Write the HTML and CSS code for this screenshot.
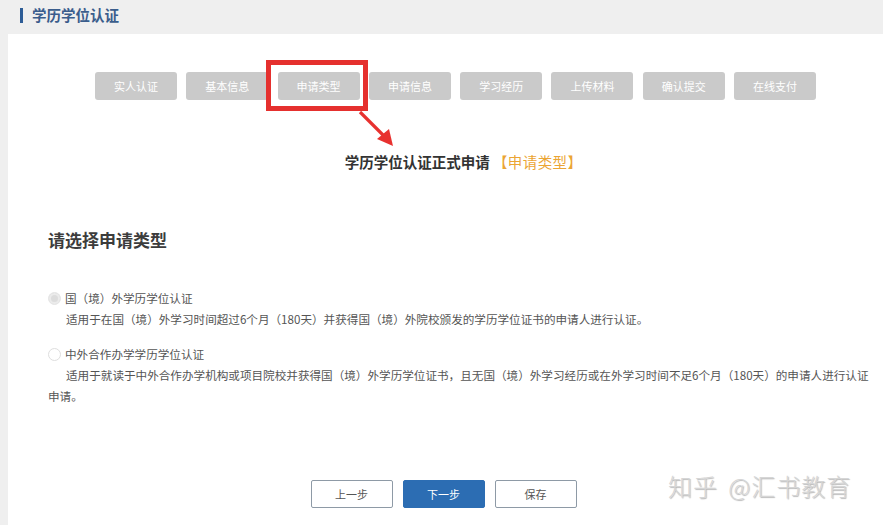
FILE: index.html
```html
<!DOCTYPE html>
<html lang="zh-CN">
<head>
    <meta charset="UTF-8">
    <meta name="viewport" content="width=device-width, initial-scale=1.0">
    <title>学历学位认证</title>

    <link rel="stylesheet" href="styles.css">
</head>
<body>

    <div class="topbar">
        <span class="topbar-mark"></span>
        <span class="topbar-title">学历学位认证</span>
    </div>

    <div class="panel">
        <div class="steps">
            <div class="step">实人认证</div>
            <div class="step">基本信息</div>
            <div class="step step-current">申请类型</div>
            <div class="step">申请信息</div>
            <div class="step">学习经历</div>
            <div class="step">上传材料</div>
            <div class="step">确认提交</div>
            <div class="step">在线支付</div>
        </div>

        <svg class="arrow" width="42" height="42" viewBox="0 0 42 42">
            <line x1="4" y1="4" x2="27" y2="27" stroke="#e8312f" stroke-width="3.2"/>
            <polygon points="21,31 33,21 37,38" fill="#e8312f"/>
        </svg>

        <h2 class="form-title">学历学位认证正式申请 <span class="form-title-tag">【申请类型】</span></h2>

        <div class="options">
            <h3 class="options-title">请选择申请类型</h3>

            <div class="option">
                <div class="option-label"><span class="radio radio-checked"></span>国（境）外学历学位认证</div>
                <p class="option-desc">适用于在国（境）外学习时间超过6个月（180天）并获得国（境）外院校颁发的学历学位证书的申请人进行认证。</p>
            </div>

            <div class="option">
                <div class="option-label"><span class="radio"></span>中外合作办学学历学位认证</div>
                <p class="option-desc">适用于就读于中外合作办学机构或项目院校并获得国（境）外学历学位证书，且无国（境）外学习经历或在外学习时间不足6个月（180天）的申请人进行认证申请。</p>
            </div>
        </div>

        <div class="actions">
            <button class="btn">上一步</button>
            <button class="btn btn-primary">下一步</button>
            <button class="btn">保存</button>
        </div>

        <div class="watermark">知乎 @汇书教育</div>
    </div>

</body>
</html>
```

FILE: styles.css
```css
* {
    padding: 0;
    margin: 0;
    box-sizing: border-box;
}

body {
    background-color: #efefef;
    font-family: "Noto Sans CJK SC", "Liberation Sans", sans-serif;
    color: #555;
    width: 883px;
    height: 525px;
    overflow: hidden;
}

.topbar {
    height: 34px;
    display: flex;
    align-items: center;
    padding: 0 0 4px 20px;
}

.topbar-mark {
    width: 3px;
    height: 15px;
    background-color: #2d5c96;
    margin-right: 9px;
}

.topbar-title {
    font-size: 14.5px;
    font-weight: bold;
    color: #3a5d8c;
    line-height: 18px;
}

.panel {
    position: relative;
    margin-left: 8px;
    height: 491px;
    background-color: #fff;
    padding-top: 38px;
}

.steps {
    display: flex;
    gap: 9.3px;
    padding-left: 87px;
}

.step {
    width: 82px;
    height: 28px;
    line-height: 28px;
    text-align: center;
    background-color: #cacaca;
    color: #fff;
    font-size: 11px;
    border-radius: 3px;
}

.step-current {
    position: relative;
}

/* red highlight frame drawn over the current step */
.step-current::after {
    content: "";
    position: absolute;
    left: -12px;
    right: -8px;
    top: -12px;
    bottom: -11px;
    border: 5px solid #e5302e;
}

.arrow {
    position: absolute;
    left: 348px;
    top: 74px;
}

.form-title {
    margin-top: 52px;
    padding-left: 36px;
    text-align: center;
    font-size: 14.5px;
    line-height: 20px;
    font-weight: bold;
    color: #333;
}

.form-title-tag {
    color: #eba534;
    font-weight: normal;
    letter-spacing: 0.4px;
}

.options {
    padding: 0 8px 0 40px;
}

.options-title {
    margin-top: 56px;
    font-size: 17px;
    line-height: 24px;
    font-weight: bold;
    color: #3c3c3c;
}

.option {
    margin-top: 36px;
    font-size: 11.6px;
    line-height: 21px;
}

.option + .option {
    margin-top: 14px;
}

.option-label {
    display: flex;
    align-items: center;
    height: 21px;
}

.option-desc {
    text-indent: 18px;
}

.radio {
    width: 13px;
    height: 13px;
    border: 1px solid #dedede;
    border-radius: 50%;
    margin-right: 4px;
    background-color: #fff;
}

.radio-checked {
    background-color: #dcdcdc;
    border-color: #e6e6e6;
    box-shadow: inset 0 0 0 2px #ebebeb;
}

.actions {
    display: flex;
    justify-content: center;
    gap: 10px;
    margin-top: 73px;
    padding-right: 4px;
}

.btn {
    width: 82px;
    height: 28px;
    font-family: inherit;
    font-size: 11px;
    color: #555;
    background-color: #fff;
    border: 1px solid #8e9aa6;
    border-radius: 2px;
}

.btn-primary {
    background-color: #2c6db3;
    border-color: #2c6db3;
    color: #fff;
}

.watermark {
    position: absolute;
    left: 660px;
    top: 434px;
    font-size: 24px;
    font-weight: 300;
    color: #d6d6d6;
    text-shadow: 1px 1px 1px rgba(0, 0, 0, 0.28);
    word-spacing: 4px;
    letter-spacing: 1px;
}
```
